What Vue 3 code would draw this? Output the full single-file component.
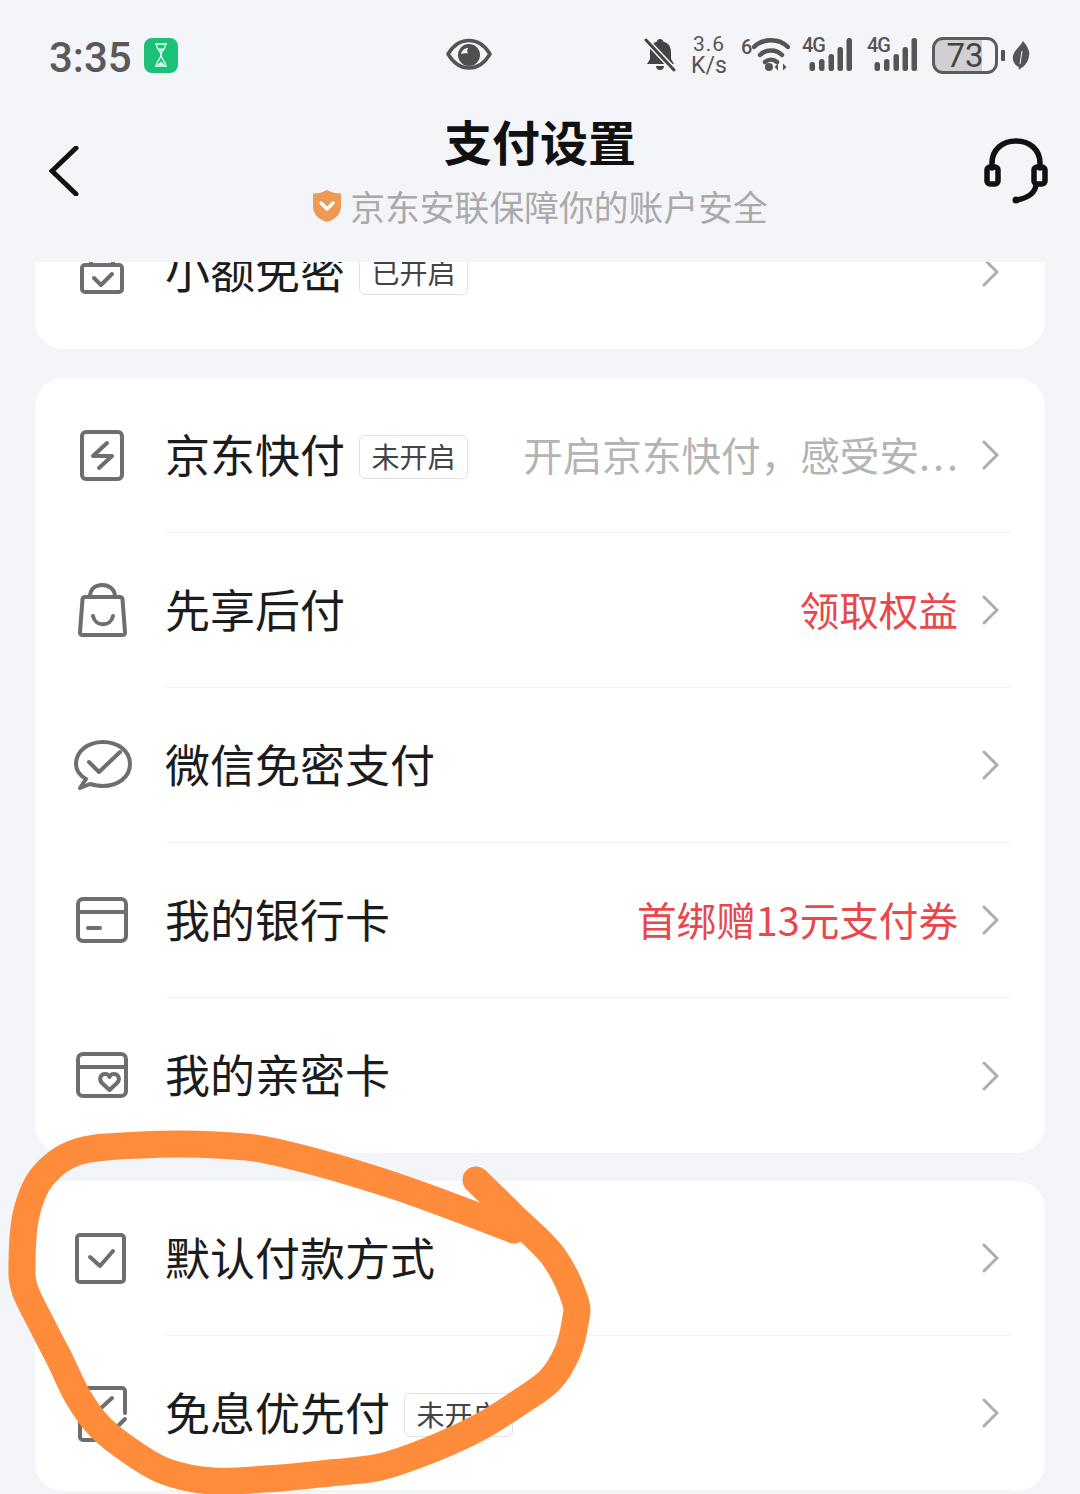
<script setup>
const groups = [
  { id: 'a', rows: [{ icon: 'cal', title: '小额免密', tag: '已开启' }] },
  {
    id: 'b',
    rows: [
      { icon: 'bolt', title: '京东快付', tag: '未开启', note: '开启京东快付，感受安', dots: true },
      { icon: 'bag', title: '先享后付', note: '领取权益', red: true },
      { icon: 'chat', title: '微信免密支付' },
      { icon: 'card', title: '我的银行卡', note: '首绑赠13元支付券', red: true },
      { icon: 'heart', title: '我的亲密卡' }
    ]
  },
  {
    id: 'c',
    rows: [
      { icon: 'check', title: '默认付款方式' },
      { icon: 'fee', title: '免息优先付', tag: '未开启' }
    ]
  }
]

const bars = [
  { x: 7.5, y: 25 },
  { x: 17, y: 22 },
  { x: 26.5, y: 17 },
  { x: 35.5, y: 10 },
  { x: 44.5, y: 1 }
]

// centre line of the hand-drawn circle, smoothed into a curve
const pts = [
  [476, 1180], [514, 1217], [553, 1256], [575, 1300], [575, 1323], [567, 1353],
  [550, 1380], [523, 1400], [480, 1427], [430, 1450], [380, 1467], [330, 1473],
  [280, 1478], [213, 1481], [167, 1472], [133, 1453], [100, 1427], [78, 1397],
  [60, 1360], [43, 1327], [25, 1290], [22, 1263], [26, 1215], [42, 1177],
  [77, 1152], [140, 1145], [217, 1145], [280, 1153], [395, 1186], [514, 1230]
]
const scribble = pts.reduce((d, p, i) => {
  if (i === 0) return `M${p[0]} ${p[1]}`
  const p0 = pts[i - 2] || pts[i - 1]
  const p1 = pts[i - 1]
  const p3 = pts[i + 1] || p
  const c1 = [p1[0] + (p[0] - p0[0]) / 6, p1[1] + (p[1] - p0[1]) / 6]
  const c2 = [p[0] - (p3[0] - p1[0]) / 6, p[1] - (p3[1] - p1[1]) / 6]
  return `${d}C${c1[0]} ${c1[1]} ${c2[0]} ${c2[1]} ${p[0]} ${p[1]}`
}, '')
</script>

<template>
  <div class="page">
    <header class="top">
      <div class="status">
        <div class="status-left">
          <span class="time">3:35</span>
          <span class="hourglass">
            <svg width="20" height="26" viewBox="0 0 20 26" fill="none" stroke="#e9fff5" stroke-width="1.300">
              <path d="M4 2h12M4 24h12M5.500 2c0 6 4.500 7 4.500 11s-4.500 5-4.500 11M14.500 2c0 6-4.500 7-4.500 11s4.500 5 4.500 11" />
              <path d="M7.500 6.500h5L10 10zM6.500 23l3.500-3.500 3.500 3.500z" fill="#e9fff5" stroke="none" />
            </svg>
          </span>
        </div>
        <svg class="eye" width="46" height="36" viewBox="0 0 46 36">
          <path d="M2 17C8 7 15 3.500 23 3.500S38 7 44 17c-6 10-13 14-21 14S8 27 2 17z" fill="none" stroke="#555" stroke-width="3.500" stroke-linejoin="round" />
          <circle cx="23" cy="18" r="11" fill="#4f4f4f" />
          <path d="M15 17c1-4 4-6 7-6-1 2-1 4 0 5.500-3-.5-5 0-7 .5z" fill="#f4f5f9" />
        </svg>
        <div class="status-right">
          <svg class="bell" width="32" height="36" viewBox="0 0 32 36">
            <path d="M16 2c1.800 0 3 1 3.200 2.600C24.500 6 27 10 27 15v7l3 5H3l3-5v-7c0-5 2.500-9 7-10.400C13 3 14.200 2 16 2zM12 29h8c0 2.500-1.800 4-4 4s-4-1.500-4-4z" fill="#444" />
            <path d="M3 4l27 29" stroke="#f4f5f9" stroke-width="6" />
            <path d="M2 3l28 30" stroke="#444" stroke-width="3" stroke-linecap="round" />
          </svg>
          <div class="speed"><span class="rate">3.6</span><span class="unit">K/s</span></div>
          <div class="wifi">
            <span class="six">6</span>
            <svg width="38" height="36" viewBox="0 0 38 36" fill="none" stroke="#555" stroke-width="4.500" stroke-linecap="round">
              <path d="M2 10C11 1 27 1 36 10M8 18c6-6 16-6 22 0M13 25c3.500-3 8.500-3 12 0" />
              <circle cx="17" cy="30" r="4" fill="#555" stroke="none" />
              <path d="M26 26.500l-3.500 3.500 3.500 3.500zM31 26.500l3.500 3.500-3.500 3.500z" fill="#555" stroke="none" />
            </svg>
          </div>
          <div v-for="n in 2" :key="n" class="signal">
            <span class="four-g">4G</span>
            <svg width="51" height="36" viewBox="0 0 51 36" fill="#555">
              <rect v-for="b in bars" :key="b.x" :x="b.x" :y="b.y" width="5.500" :height="34 - b.y" rx="2.500" />
            </svg>
          </div>
          <div class="battery"><span>73</span></div>
          <span class="nub"></span>
          <svg width="18" height="30" viewBox="0 0 18 30">
            <path d="M11 1c5 6 7 10 6 15-1 6-4 10-8 12l-1 1.500-1.500-.5.500-1.500C3 25 0 21 1 16 2 10 8 7 11 1z" fill="#555" />
            <path d="M10 11L8 24" stroke="#f4f5f9" stroke-width="1" />
          </svg>
        </div>
      </div>
      <div class="nav">
        <svg class="back" width="30" height="50" viewBox="0 0 30 50" fill="none" stroke="#111" stroke-width="5" stroke-linecap="round">
          <path d="M27 2L3 25l24 23" />
        </svg>
        <div class="heading">
          <h1>支付设置</h1>
          <p>
            <svg width="30" height="34" viewBox="0 0 30 34">
              <path d="M15 1c4 2.500 9 3.500 14 3.500v13C29 26 22 31 15 33 8 31 1 26 1 17.500v-13C6 4.500 11 3.500 15 1z" fill="#ee9a52" />
              <path d="M9 14l6 6 6-6" fill="none" stroke="#fff" stroke-width="3.500" stroke-linecap="round" stroke-linejoin="round" />
            </svg>
            <span>京东安联保障你的账户安全</span>
          </p>
        </div>
        <svg class="headset" width="66" height="66" viewBox="0 0 66 66" fill="none" stroke="#111" stroke-width="5.500" stroke-linecap="round" stroke-linejoin="round">
          <path d="M9 30V25C9 12 19 3 33 3s24 9 24 22v5" />
          <rect x="4" y="29" width="11" height="17" rx="3" />
          <rect x="51" y="29" width="11" height="17" rx="3" />
          <path d="M53 47c-1 8-9 13-19 15" />
          <circle cx="33" cy="62" r="3.500" fill="#111" stroke="none" />
        </svg>
      </div>
    </header>

    <main class="list">
      <section v-for="g in groups" :key="g.id" class="group" :class="'group-' + g.id">
        <div v-for="r in g.rows" :key="r.title" class="row">
          <svg class="icon" width="56" height="56" viewBox="0 0 56 56" fill="none" stroke="#6e6e6e" stroke-width="4" stroke-linecap="round" stroke-linejoin="round">
            <template v-if="r.icon === 'cal'">
              <rect x="7" y="22" width="40" height="27" rx="3" />
              <path d="M16 17v5M38 17v5" />
              <path d="M19 35l7 7 11-11" />
            </template>
            <template v-else-if="r.icon === 'bolt'">
              <rect x="7" y="5" width="40" height="47" rx="4" />
              <path d="M32 16L18 29h19L24 41" />
            </template>
            <template v-else-if="r.icon === 'bag'">
              <path d="M10 15h35a2.500 2.500 0 0 1 2.500 2.500L50 50a2.500 2.500 0 0 1-2.500 3h-40A2.500 2.500 0 0 1 5 50l2.500-32.500A2.500 2.500 0 0 1 10 15z" />
              <path d="M15 15C15 7 20 3 27 3s13 4 13 12" />
              <path d="M18 34c2 11 18 11 20 0" />
            </template>
            <template v-else-if="r.icon === 'chat'">
              <path d="M11 42C4 38 1 33 1 27 1 14 13 5 28 5s27 9 27 22-12 22-27 22c-5 0-9-1-13-2L5 51z" />
              <path d="M14 25l10 10 21-20" />
            </template>
            <template v-else-if="r.icon === 'card'">
              <rect x="3" y="7" width="48" height="42" rx="5" />
              <path d="M3 20h48" />
              <path d="M13 36h12" />
            </template>
            <template v-else-if="r.icon === 'heart'">
              <rect x="3" y="7" width="48" height="42" rx="5" />
              <path d="M3 20h48" />
              <path d="M34.500 43L27 36c-4-4-1-9 3-9 2 0 4 1 4.500 3 .5-2 2.500-3 4.500-3 4 0 7 5 3 9z" />
            </template>
            <template v-else-if="r.icon === 'check'">
              <rect x="2" y="5" width="47" height="47" rx="3" />
              <path d="M15 27l10 9 13-15" />
            </template>
            <template v-else>
              <path d="M50 28V6a3 3 0 0 0-3-3H8a3 3 0 0 0-3 3v46a3 3 0 0 0 3 3h32" />
              <path d="M50 34l-6 6" />
              <path d="M16 16l9 8 12-11" />
            </template>
          </svg>
          <div class="body">
            <span class="title">{{ r.title }}</span>
            <span v-if="r.tag" class="tag">{{ r.tag }}</span>
            <span v-if="r.note" class="note" :class="{ red: r.red }">{{ r.note }}<span v-if="r.dots" class="dots">...</span></span>
            <svg class="chev" width="17" height="30" viewBox="0 0 17 30" fill="none" stroke="#adadad" stroke-width="3" stroke-linecap="round">
              <path d="M2 2l13 13L2 28" />
            </svg>
          </div>
        </div>
      </section>
    </main>

    <svg class="scribble" width="1080" height="1494" viewBox="0 0 1080 1494" fill="none" stroke="#ff8c3a" stroke-width="27" stroke-linecap="round" stroke-linejoin="round">
      <path :d="scribble" />
    </svg>
  </div>
</template>

<style>
html, body { margin: 0; background: #f4f5f9; }
</style>

<style scoped>
.page {
  position: relative;
  width: 1080px;
  height: 1494px;
  overflow: hidden;
  background: #f4f5f9;
  font-family: "Noto Sans CJK SC", "Noto Sans", sans-serif;
  color: #222;
}
.top {
  position: relative;
  z-index: 1;
  height: 262px;
  background: #f4f5f9;
}
.status {
  display: grid;
  grid-template-columns: 396px 46px 1fr;
  align-items: center;
  height: 110px;
  padding: 0 50px;
  box-sizing: border-box;
  color: #555;
}
.status-left { display: flex; align-items: center; gap: 13px; }
.time { font: 500 42px/1 Roboto, sans-serif; color: #5a5a5a; margin: 5px -1px 0 -1px; }
.hourglass {
  display: flex;
  align-items: center;
  justify-content: center;
  width: 34px;
  height: 35px;
  border-radius: 8px;
  background: #1cc178;
}
.status-right { display: flex; align-items: center; justify-content: flex-end; }
.bell { margin-right: 16px; }
.speed {
  display: flex;
  flex-direction: column;
  align-items: center;
  width: 34px;
  margin-right: 15px;
  color: #555;
}
.rate { font: 400 21px/22px Roboto, sans-serif; letter-spacing: 1px; }
.unit { font: 400 23px/22px Roboto, sans-serif; }
.wifi { display: flex; align-items: flex-start; margin-right: 12px; }
.six { width: 11px; font: 500 20px/20px Roboto, sans-serif; }
.signal { position: relative; width: 51px; height: 36px; margin-right: 14px; }
.four-g {
  position: absolute;
  top: -2px;
  left: 0;
  font: 500 20px/20px Roboto, sans-serif;
  letter-spacing: -1px;
}
.signal svg { display: block; }
.battery {
  display: flex;
  align-items: center;
  justify-content: center;
  width: 66px;
  height: 37px;
  box-sizing: border-box;
  border: 3px solid #5c5c5c;
  border-radius: 11px;
  background: linear-gradient(90deg, #d0d0d2 78%, transparent 78%);
  font: 400 33px/1 Roboto, sans-serif;
  color: #444;
}
.nub { width: 4px; height: 11px; margin: 0 7px 0 3px; background: #555; border-radius: 1px; }
.nav {
  display: grid;
  grid-template-columns: 1fr auto 1fr;
  padding: 0 31px;
}
.back { margin: 36px 0 0 18px; }
.headset { justify-self: end; margin-top: 28px; }
.heading { text-align: center; }
h1 {
  margin: 2px 0 0;
  font-size: 48px;
  line-height: 56px;
  font-weight: 700;
  color: #111;
}
.heading p {
  display: flex;
  align-items: center;
  justify-content: center;
  gap: 8px;
  margin: 18px 0 0;
  font-size: 34.800px;
  line-height: 40px;
  color: #aaa;
}
.list {
  display: flex;
  flex-direction: column;
  gap: 28px;
  margin: -68px 35px 0;
}
.group {
  background: #fff;
  border-radius: 28px;
  overflow: hidden;
}
.group-a { margin-bottom: 1px; }
.row { display: flex; align-items: center; padding-left: 40px; }
.icon { flex: none; margin: 0 34px 2px 0; overflow: visible; }
.body {
  flex: 1;
  min-width: 0;
  display: flex;
  align-items: center;
  height: 155px;
  margin-right: 33px;
  padding-right: 13px;
  box-sizing: border-box;
  border-bottom: 1px solid #f2f2f3;
}
.row:last-child .body { border-bottom: none; }
.group-c .row:last-child .body { border-bottom: 1px solid #f2f2f3; }
.title { flex: none; margin-bottom: 3px; font-size: 45px; line-height: 56px; color: #1c1c1c; }
.tag {
  flex: none;
  margin: 3px 0 0 14px;
  width: 109px;
  height: 44px;
  box-sizing: border-box;
  border: 1px solid #e2e2e4;
  border-radius: 6px;
  text-align: center;
  font-size: 28px;
  line-height: 40px;
  color: #444;
}
.note {
  margin: 0 0 3px auto;
  white-space: nowrap;
  font-size: 39.600px;
  line-height: 50px;
  color: #b4b4b4;
}
.note.red { color: #e8484c; }
.dots { letter-spacing: 3px; margin-right: -3px; }
.chev { flex: none; margin-left: auto; }
.note + .chev { margin-left: 24px; }
.scribble { position: absolute; top: 0; left: 0; z-index: 2; pointer-events: none; }
</style>
